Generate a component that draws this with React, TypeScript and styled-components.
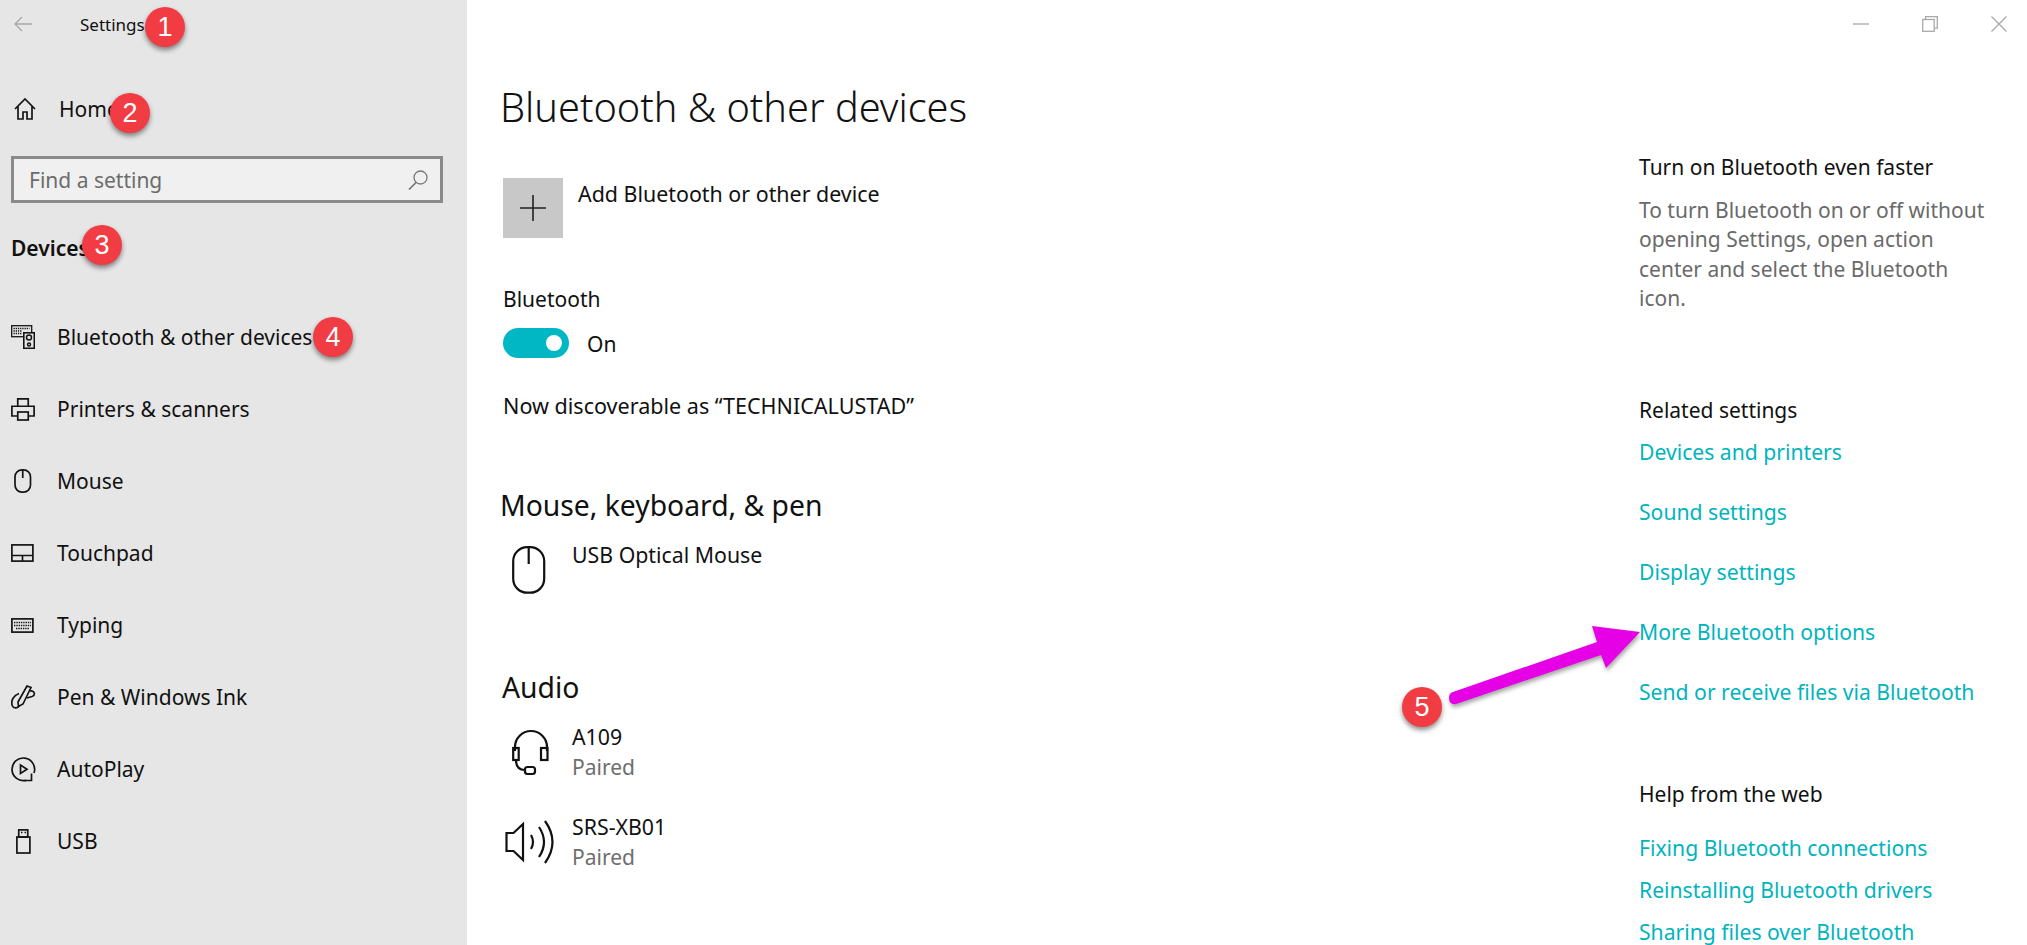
import React from "react";
import styled, { createGlobalStyle } from "styled-components";

const Global = createGlobalStyle`
  html, body { margin: 0; padding: 0; background: #fff; overflow: hidden; }
  * { box-sizing: border-box; }
`;

const Root = styled.div`
  position: relative;
  display: grid;
  grid-template-columns: 467px 1fr;
  width: 2027px;
  height: 945px;
  overflow: hidden;
  font-family: "Noto Sans", "Open Sans", sans-serif;
  font-size: 21px;
  color: #111;
`;

const Sidebar = styled.aside`
  display: flex;
  flex-direction: column;
  background: #e6e6e6;
`;

const BackRow = styled.div`
  display: flex;
  align-items: center;
  height: 48px;
  padding-left: 14px;
  gap: 48px;
  font-size: 17px;
`;

const HomeRow = styled.div`
  display: flex;
  align-items: center;
  height: 72px;
  margin-top: 25px;
  padding-left: 14px;
  gap: 23px;
`;

const SearchBox = styled.div`
  display: flex;
  align-items: center;
  justify-content: space-between;
  width: 432px;
  height: 47px;
  margin: 11px 0 0 11px;
  padding: 0 12px 0 15px;
  border: 3px solid #8a8a8a;
  background: #f0f0f0;
  color: #6c6c6c;
`;

const SectionLabel = styled.div`
  height: 40px;
  margin: 25px 0 0 11px;
  line-height: 40px;
  font-weight: 600;
`;

const NavList = styled.nav`
  display: flex;
  flex-direction: column;
  margin-top: 33px;
`;

const NavRow = styled.div`
  display: flex;
  align-items: center;
  height: 72px;
  padding-left: 11px;
`;

const NavIcon = styled.span`
  display: flex;
  width: 46px;
  flex: none;
`;

const Main = styled.main`
  display: flex;
  flex-direction: column;
  min-width: 0;
`;

const TitleBar = styled.div`
  display: flex;
  align-items: center;
  justify-content: flex-end;
  gap: 53px;
  height: 48px;
  padding-right: 20px;
`;

const Columns = styled.div`
  display: grid;
  grid-template-columns: 1139px 1fr;
  padding-left: 33px;
`;

const Content = styled.section`
  display: flex;
  flex-direction: column;
`;

const PageTitle = styled.h1`
  margin: 29px 0 0;
  height: 60px;
  line-height: 60px;
  font-size: 39.7px;
  font-weight: 300;
  color: #111;
`;

const AddRow = styled.div`
  display: flex;
  gap: 15px;
  margin: 41px 0 0 3px;
  height: 60px;
`;

const AddTile = styled.div`
  display: flex;
  align-items: center;
  justify-content: center;
  width: 60px;
  height: 60px;
  background: #c8c8c8;
`;

const BodyLine = styled.div`
  line-height: 32px;
  font-size: 21.4px;
`;

const ToggleLabel = styled(BodyLine)`
  margin: 45px 0 0 3px;
  font-size: 21px;
`;

const ToggleRow = styled.div`
  display: flex;
  align-items: center;
  gap: 18px;
  margin: 13px 0 0 3px;
  height: 30px;
`;

const ToggleState = styled.span`
  padding-top: 2px;
`;

const Toggle = styled.div`
  display: flex;
  align-items: center;
  justify-content: flex-end;
  width: 66px;
  height: 30px;
  padding-right: 7px;
  border-radius: 15px;
  background: #00b7c3;
`;

const Knob = styled.span`
  width: 16px;
  height: 16px;
  border-radius: 50%;
  background: #fff;
`;

const Discoverable = styled(BodyLine)`
  margin: 32px 0 0 3px;
  font-size: 21.55px;
`;

const GroupTitle = styled.h2<{ $top: number; $indent?: number }>`
  margin: ${(p) => p.$top}px 0 0 ${(p) => p.$indent ?? 0}px;
  height: 40px;
  line-height: 40px;
  font-size: 28.3px;
  font-weight: 400;
  color: #111;
`;

const DeviceList = styled.div`
  display: flex;
  flex-direction: column;
  gap: 30px;
  margin-top: 15px;
`;

const DeviceRow = styled.div`
  display: flex;
  min-height: 60px;
`;

const DeviceIcon = styled.span`
  display: flex;
  align-items: center;
  justify-content: center;
  width: 60px;
  height: 60px;
  margin-right: 12px;
  flex: none;
`;

const DeviceText = styled.div`
  display: flex;
  flex-direction: column;
  line-height: 30px;
  font-size: 21.3px;
`;

const Muted = styled.span`
  color: #6e6e6e;
  font-size: 21px;
`;

const Aside = styled.aside`
  display: flex;
  flex-direction: column;
`;

const AsideTitle = styled.div<{ $top: number }>`
  margin-top: ${(p) => p.$top}px;
  line-height: 32px;
`;

const Paragraph = styled.p`
  margin: 12.5px 0 0;
  width: 350px;
  line-height: 29.5px;
  color: #6a6a6a;
`;

const LinkGroup = styled.div<{ $top: number; $gap: number }>`
  display: flex;
  flex-direction: column;
  margin-top: ${(p) => p.$top}px;
  gap: ${(p) => p.$gap}px;
`;

const AsideLink = styled.a`
  line-height: 32px;
  font-size: 21.15px;
  color: #00b4be;
`;

const Badge = styled.span<{ $x: number; $y: number }>`
  position: absolute;
  left: ${(p) => p.$x - 20}px;
  top: ${(p) => p.$y - 20}px;
  display: flex;
  align-items: center;
  justify-content: center;
  width: 40px;
  height: 40px;
  border-radius: 50%;
  background: #f23c43;
  box-shadow: 0 3px 5px rgba(0, 0, 0, 0.45);
  color: #fff;
  font-family: "Liberation Sans", sans-serif;
  font-size: 27px;
`;

const ArrowLayer = styled.svg`
  position: absolute;
  left: 1440px;
  top: 620px;
  filter: drop-shadow(1px 3px 2px rgba(0, 0, 0, 0.35));
`;

const ink = { fill: "none", stroke: "#141414", strokeWidth: 1.7 };
const pale = { fill: "none", stroke: "#a8a8a8", strokeWidth: 1.3 };

const BackIcon = () => (
  <svg width="18" height="16" viewBox="0 0 18 16" {...pale}>
    <path d="M18 8H1M8 1 1 8l7 7" />
  </svg>
);
const HomeIcon = () => (
  <svg width="22" height="22" viewBox="0 0 22 22" {...ink}>
    <path d="M1 11 11 1l10 10M4 8.500V21h5v-7h4v7h5V8.500" />
  </svg>
);
const SearchIcon = () => (
  <svg width="20" height="20" viewBox="0 0 20 20" fill="none" stroke="#777" strokeWidth="1.3">
    <circle cx="12.500" cy="7.500" r="6.500" />
    <path d="M8 12.500 1 19.500" strokeWidth="1.700" />
  </svg>
);
const DevicesIcon = () => (
  <svg width="24" height="24" viewBox="0 0 24 24" {...ink}>
    <rect x=".7" y=".7" width="20" height="11" strokeWidth="1.300" />
    <path d="M2.500 3.500h16M2.500 6h8M2.500 8.500h8" strokeDasharray="1.300 .9" strokeWidth="1.300" />
    <rect x="12.800" y="7.800" width="10.500" height="15.500" fill="#e6e6e6" strokeWidth="1.600" />
    <circle cx="18" cy="12.500" r="2.500" strokeWidth="1.500" />
    <circle cx="18" cy="19.500" r="1.500" strokeWidth="1.500" />
  </svg>
);
const PrinterIcon = () => (
  <svg width="24" height="23" viewBox="0 0 24 23" {...ink}>
    <path d="M6.750 8V.9h10.500V8M6 18H.9V8.250h22.200V18H18" />
    <rect x="6.750" y="14" width="10.500" height="8" />
  </svg>
);
const MouseIcon = () => (
  <svg width="18" height="24" viewBox="0 0 18 24" {...ink} style={{ marginLeft: 3 }}>
    <rect x="1" y=".9" width="15.500" height="22.200" rx="7" />
    <path d="M8.750 1v8" />
  </svg>
);
const TouchpadIcon = () => (
  <svg width="23" height="18" viewBox="0 0 23 18" {...ink}>
    <rect x=".9" y=".9" width="21" height="16.200" />
    <path d="M1 11.500h21M11.500 11.500V17" />
  </svg>
);
const KeyboardIcon = () => (
  <svg width="23" height="15" viewBox="0 0 23 15" {...ink}>
    <rect x=".9" y=".9" width="21" height="13.200" />
    <path d="M3 4.500h17M3 7.500h17M5 10.500h13" strokeDasharray="1.400 .9" strokeWidth="1.400" />
  </svg>
);
const PenIcon = () => (
  <svg width="25" height="25" viewBox="0 0 25 25" {...ink}>
    <path d="M16 1l4 1.500-8 16.500-4.500 2.500-.5-4.500z" />
    <path d="M8 8.500C3 10.500-.5 15 1.200 20.500c1.300 3.300 5 3 7 .5" />
    <path d="M19 6c4.500-.5 6 4 2 5.500l-5 1.500" />
  </svg>
);
const AutoPlayIcon = () => (
  <svg width="25" height="25" viewBox="0 0 25 25" {...ink}>
    <path d="M15 23.300A11.300 11.300 0 1 1 23 16" />
    <path d="M20.500 16.500v7h-7" />
    <path d="M9.500 8v8.500l6.500-4.200z" />
  </svg>
);
const UsbIcon = () => (
  <svg width="15" height="25" viewBox="0 0 15 25" {...ink} style={{ marginLeft: 5 }}>
    <rect x=".9" y="8" width="13" height="16" />
    <rect x="2.750" y=".9" width="9" height="7.100" />
    <path d="M5 3.500h1.500M8.500 3.500H10" />
  </svg>
);
const PlusIcon = () => (
  <svg width="26" height="26" viewBox="0 0 26 26" fill="none" stroke="#222" strokeWidth="1.600">
    <path d="M13 0v26M0 13h26" />
  </svg>
);
const BigMouseIcon = () => (
  <svg width="34" height="48" viewBox="0 0 34 48" fill="none" stroke="#111" strokeWidth="2.200" style={{ marginRight: 3 }}>
    <rect x="1.200" y="1.200" width="31" height="45.500" rx="14" />
    <path d="M16.700 1.500V18" />
  </svg>
);
const HeadsetIcon = () => (
  <svg width="38" height="48" viewBox="0 0 38 48" fill="none" stroke="#111" strokeWidth="2.200" style={{ marginLeft: 2 }}>
    <path d="M3 23V19a16 16 0 0 1 32 0v4" />
    <rect x="1.200" y="20" width="5.500" height="12" />
    <rect x="29" y="20" width="6.500" height="12" />
    <path d="M4 32c0 7 3 10 9 10" />
    <rect x="13" y="39" width="10" height="7" rx="2.500" />
  </svg>
);
const SpeakerIcon = () => (
  <svg width="50" height="44" viewBox="0 0 50 44" fill="none" stroke="#111" strokeWidth="2.200">
    <path d="M1.500 13H8.500L18 4V40L8.500 31H1.500z" />
    <path d="M26 15q4 7 0 14M34 7q10 15 0 30" />
    <path d="M40 1q15 21 0 42" />
  </svg>
);
const MinimizeIcon = () => (
  <svg width="16" height="16" viewBox="0 0 16 16" {...pale}>
    <path d="M0 8h16" />
  </svg>
);
const RestoreIcon = () => (
  <svg width="16" height="16" viewBox="0 0 16 16" {...pale}>
    <rect x=".7" y="3.500" width="11.500" height="11.800" />
    <path d="M3.500 3.500V.7h11.800v11.500h-3" />
  </svg>
);
const CloseIcon = () => (
  <svg width="16" height="16" viewBox="0 0 16 16" {...pale}>
    <path d="M.5.5l15 15M15.500.5l-15 15" />
  </svg>
);

const navItems: [React.ComponentType, string][] = [
  [DevicesIcon, "Bluetooth & other devices"],
  [PrinterIcon, "Printers & scanners"],
  [MouseIcon, "Mouse"],
  [TouchpadIcon, "Touchpad"],
  [KeyboardIcon, "Typing"],
  [PenIcon, "Pen & Windows Ink"],
  [AutoPlayIcon, "AutoPlay"],
  [UsbIcon, "USB"],
];

export default function App() {
  return (
    <Root>
      <Global />
      <Sidebar>
        <BackRow>
          <BackIcon />
          <span>Settings</span>
        </BackRow>
        <HomeRow>
          <HomeIcon />
          <span>Home</span>
        </HomeRow>
        <SearchBox>
          <span>Find a setting</span>
          <SearchIcon />
        </SearchBox>
        <SectionLabel>Devices</SectionLabel>
        <NavList>
          {navItems.map(([Icon, label]) => (
            <NavRow key={label}>
              <NavIcon>
                <Icon />
              </NavIcon>
              <span>{label}</span>
            </NavRow>
          ))}
        </NavList>
      </Sidebar>
      <Main>
        <TitleBar>
          <MinimizeIcon />
          <RestoreIcon />
          <CloseIcon />
        </TitleBar>
        <Columns>
          <Content>
            <PageTitle>Bluetooth &amp; other devices</PageTitle>
            <AddRow>
              <AddTile>
                <PlusIcon />
              </AddTile>
              <BodyLine>Add Bluetooth or other device</BodyLine>
            </AddRow>
            <ToggleLabel>Bluetooth</ToggleLabel>
            <ToggleRow>
              <Toggle>
                <Knob />
              </Toggle>
              <ToggleState>On</ToggleState>
            </ToggleRow>
            <Discoverable>Now discoverable as “TECHNICALUSTAD”</Discoverable>
            <GroupTitle $top={63}>Mouse, keyboard, &amp; pen</GroupTitle>
            <DeviceList>
              <DeviceRow>
                <DeviceIcon>
                  <BigMouseIcon />
                </DeviceIcon>
                <DeviceText>USB Optical Mouse</DeviceText>
              </DeviceRow>
            </DeviceList>
            <GroupTitle $top={67} $indent={2}>Audio</GroupTitle>
            <DeviceList>
              <DeviceRow>
                <DeviceIcon>
                  <HeadsetIcon />
                </DeviceIcon>
                <DeviceText>
                  <span>A109</span>
                  <Muted>Paired</Muted>
                </DeviceText>
              </DeviceRow>
              <DeviceRow>
                <DeviceIcon>
                  <SpeakerIcon />
                </DeviceIcon>
                <DeviceText>
                  <span>SRS-XB01</span>
                  <Muted>Paired</Muted>
                </DeviceText>
              </DeviceRow>
            </DeviceList>
          </Content>
          <Aside>
            <AsideTitle $top={103}>Turn on Bluetooth even faster</AsideTitle>
            <Paragraph>
              To turn Bluetooth on or off without opening Settings, open action center and select the Bluetooth icon.
            </Paragraph>
            <AsideTitle $top={80}>Related settings</AsideTitle>
            <LinkGroup $top={10} $gap={28}>
              <AsideLink>Devices and printers</AsideLink>
              <AsideLink>Sound settings</AsideLink>
              <AsideLink>Display settings</AsideLink>
              <AsideLink>More Bluetooth options</AsideLink>
              <AsideLink>Send or receive files via Bluetooth</AsideLink>
            </LinkGroup>
            <AsideTitle $top={70}>Help from the web</AsideTitle>
            <LinkGroup $top={22} $gap={10}>
              <AsideLink>Fixing Bluetooth connections</AsideLink>
              <AsideLink>Reinstalling Bluetooth drivers</AsideLink>
              <AsideLink>Sharing files over Bluetooth</AsideLink>
            </LinkGroup>
          </Aside>
        </Columns>
      </Main>
      <Badge $x={165} $y={27}>1</Badge>
      <Badge $x={130} $y={113}>2</Badge>
      <Badge $x={102} $y={245}>3</Badge>
      <Badge $x={333} $y={337}>4</Badge>
      <Badge $x={1422} $y={707}>5</Badge>
      <ArrowLayer width="205" height="95" viewBox="0 0 205 95">
        <path d="M13 72 157 22 152 6 200 12 166 48 161 35 16 84Q9 85 9 78 9 73 13 72Z" fill="#e600e6" />
      </ArrowLayer>
    </Root>
  );
}
